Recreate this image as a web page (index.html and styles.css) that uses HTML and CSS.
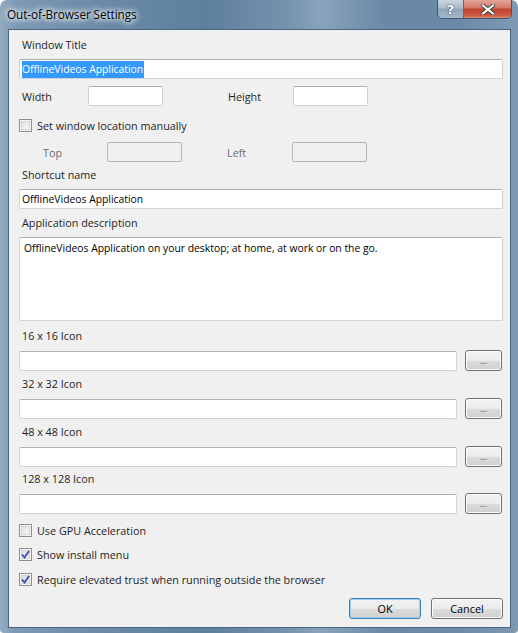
FILE: index.html
```html
<!DOCTYPE html>
<html>
<head>
<meta charset="utf-8">
<link rel="stylesheet" href="styles.css">
</head>
<body>
<div class="window">
  <div class="titlebar">
    <span class="title">Out-of-Browser Settings</span>
    <div class="caption-btns">
      <div class="cap help">?</div>
      <div class="cap close">
        <svg width="14" height="11" viewBox="0 0 14 11"><path d="M2 1.5 L12 9.5 M12 1.5 L2 9.5" stroke="#3a3a3a" stroke-width="4" stroke-linecap="square"/><path d="M2 1.5 L12 9.5 M12 1.5 L2 9.5" stroke="#ffffff" stroke-width="2.2" stroke-linecap="square"/></svg>
      </div>
    </div>
  </div>
  <div class="client">
    <div class="label">Window Title</div>
    <div class="field full"><span class="sel">OfflineVideos Application</span></div>

    <div class="pair-row r-size">
      <span class="plabel w1">Width</span>
      <div class="field small"></div>
      <span class="plabel w2">Height</span>
      <div class="field small"></div>
    </div>

    <label class="check r-loc">
      <span class="box"></span>
      <span>Set window location manually</span>
    </label>

    <div class="pair-row r-pos">
      <span class="plabel dim p1">Top</span>
      <div class="field small disabled"></div>
      <span class="plabel dim p2">Left</span>
      <div class="field small disabled"></div>
    </div>

    <div class="label m5">Shortcut name</div>
    <div class="field full">OfflineVideos Application</div>

    <div class="label m6">Application description</div>
    <div class="field full area">OfflineVideos Application on your desktop; at home, at work or on the go.</div>

    <div class="label m7">16 x 16 Icon</div>
    <div class="icon-row"><div class="field grow"></div><button class="btn dots">...</button></div>

    <div class="label m5">32 x 32 Icon</div>
    <div class="icon-row"><div class="field grow"></div><button class="btn dots">...</button></div>

    <div class="label m5">48 x 48 Icon</div>
    <div class="icon-row"><div class="field grow"></div><button class="btn dots">...</button></div>

    <div class="label m4">128 x 128 Icon</div>
    <div class="icon-row"><div class="field grow"></div><button class="btn dots">...</button></div>

    <label class="check m8">
      <span class="box"></span>
      <span>Use GPU Acceleration</span>
    </label>
    <label class="check m8">
      <span class="box checked"><svg width="9" height="9" viewBox="0 0 9 9"><path d="M1 4.5 L3.5 7.5 L8 1" fill="none" stroke="#3d4f9a" stroke-width="1.8"/></svg></span>
      <span>Show install menu</span>
    </label>
    <label class="check m9">
      <span class="box checked"><svg width="9" height="9" viewBox="0 0 9 9"><path d="M1 4.5 L3.5 7.5 L8 1" fill="none" stroke="#3d4f9a" stroke-width="1.8"/></svg></span>
      <span>Require elevated trust when running outside the browser</span>
    </label>

    <div class="actions">
      <button class="btn default">OK</button>
      <button class="btn">Cancel</button>
    </div>
  </div>
</div>
</body>
</html>
```

FILE: styles.css
```css
* { box-sizing: border-box; }
html, body { margin: 0; padding: 0; }
body {
  width: 518px;
  height: 633px;
  overflow: hidden;
  background: #ffffff;
  font-family: "Open Sans", "Noto Sans", "DejaVu Sans", sans-serif;
}
.window {
  width: 518px;
  height: 633px;
  display: flex;
  flex-direction: column;
  background:
    linear-gradient(90deg, #93abc1 0%, #7d99b4 3%, #6a8aa8 20%, #5e7f9e 40%, #7592ad 55%, #89a3ba 62%, #6888a6 75%, #6a8aa7 88%, #7e9ab3 100%);
  border-radius: 7px 7px 4px 4px;
  padding: 0 7px 5px 8px;
}
.titlebar {
  height: 29px;
  display: flex;
  align-items: flex-start;
  justify-content: space-between;
  position: relative;
}
.title {
  margin-top: 6px;
  margin-left: -1px;
  font-size: 11.8px;
  color: #000;
  text-shadow: 0 0 8px #fff, 0 0 6px #fff, 0 0 4px rgba(255,255,255,0.9);
  letter-spacing: -0.1px;
}
.caption-btns {
  display: flex;
  margin-right: -1px;
  height: 19px;
  border: 1px solid #3c5a78;
  border-top: none;
  border-radius: 0 0 5px 5px;
  overflow: hidden;
}
.cap {
  height: 18px;
  display: flex;
  align-items: center;
  justify-content: center;
}
.help {
  width: 26px;
  background: linear-gradient(#c9d5e1 0%, #aabbcc 45%, #8ea4ba 50%, #a7b9ca 100%);
  border-right: 1px solid #4e6b88;
  color: #fff;
  font-weight: bold;
  font-size: 13px;
  font-family: "DejaVu Sans", sans-serif;
  text-shadow: 0 0 2px #33475c, 0 0 1px #33475c;
}
.close {
  width: 47px;
  background: linear-gradient(#e5a597 0%, #d47868 45%, #c2422f 50%, #cc5a43 85%, #e08a6a 100%);
}
.client {
  flex: 1;
  background: #f0f0f0;
  border: 1px solid #4a6580;
  padding: 7px 7px 0 10px;
  display: flex;
  flex-direction: column;
  font-size: 10.8px;
  color: #1e1e1e;
}
.label {
  height: 16px;
  line-height: 16px;
  font-size: 10.8px;
  padding-left: 3px;
  margin-bottom: 6px;
}
.m4 { margin-top: 4px; }
.m5 { margin-top: 5px; }
.m6 { margin-top: 6px; }
.m7 { margin-top: 7px; }
.m8 { margin-top: 8px; }
.m9 { margin-top: 9px; }
.field {
  height: 20px;
  background: #fff;
  border: 1px solid #cfd3d8;
  border-top-color: #acb0b6;
  border-radius: 2px;
  font-size: 10.35px;
  line-height: 18px;
  padding-left: 2px;
  color: #000;
}
.full { width: 484px; }
.sel {
  background: #3399ff;
  color: #fff;
  padding: 1px 1px 2px 0;
}
.area {
  height: 84px;
  line-height: 15px;
  padding: 3px 4px;
}
.pair-row {
  display: flex;
  align-items: center;
  height: 20px;
}
.r-size { margin-top: 7px; }
.r-pos { margin-top: 9px; }
.plabel { font-size: 10.8px; }
.dim { color: #6d6d6d; }
.w1 { width: 69px; padding-left: 3px; }
.w2 { width: 65px; margin-left: 65px; }
.p1 { width: 88px; padding-left: 24px; }
.p2 { width: 65px; margin-left: 45px; }
.small { width: 75px; }
.disabled {
  background: #f0f0f0;
  border-color: #b5b5b5;
}
.check {
  display: flex;
  align-items: center;
  height: 16px;
  font-size: 10.8px;
  gap: 5px;
}
.r-loc { margin-top: 11px; }
.box {
  width: 13px;
  height: 13px;
  border: 1px solid #8f8f8f;
  background: linear-gradient(135deg, #dcdcdc 0%, #f4f4f4 70%, #fbfbfb 100%);
  box-shadow: inset 0 0 0 1px #f4f4f4, inset 0 0 0 2px #d4d4d4;
  display: flex;
  align-items: center;
  justify-content: center;
}
.box.checked {
  background: linear-gradient(135deg, #d8dde8 0%, #f0f2f6 100%);
}
.icon-row {
  display: flex;
  align-items: center;
  gap: 8px;
  width: 484px;
  height: 21px;
}
.grow { width: 438px; }
.btn {
  font-family: inherit;
  font-size: 10.8px;
  color: #000;
  height: 21px;
  border: 1px solid #707070;
  border-radius: 3px;
  background: linear-gradient(#f2f2f2 0%, #ebebeb 50%, #dddddd 51%, #cfcfcf 100%);
  box-shadow: inset 0 0 0 1px #fbfbfb;
  padding: 0;
  margin: 0;
}
.dots {
  width: 37px;
  height: 21px;
  font-size: 9px;
  line-height: 10px;
  color: #444;
}
.actions {
  display: flex;
  justify-content: flex-end;
  gap: 10px;
  margin-top: 11px;
  width: 484px;
}
.actions .btn { width: 72px; }
.default {
  border-color: #3c7fb1;
  box-shadow: inset 0 0 0 1px #98d1ef;
}
```
